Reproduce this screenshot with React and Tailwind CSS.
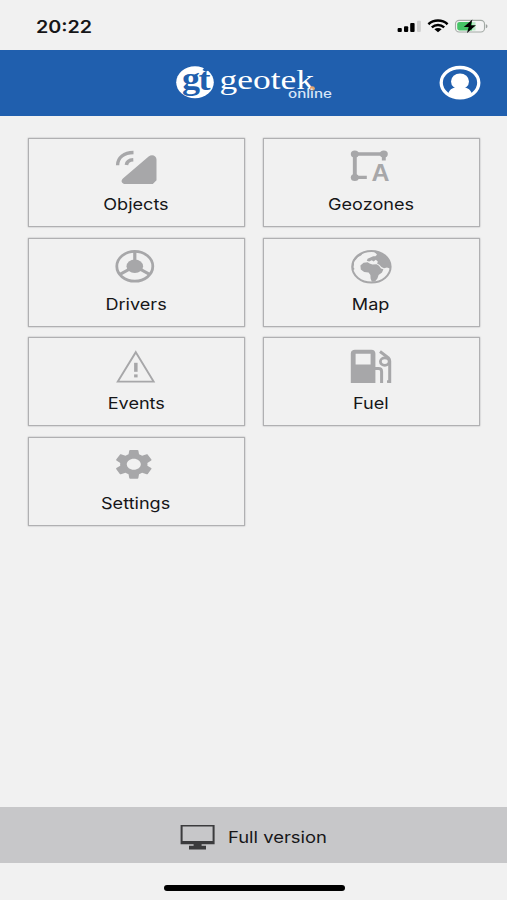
import React from 'react';

function ObjectsIcon() {
  return (
    <svg width="44" height="36" viewBox="0 0 44 36" fill="none">
      <path d="M3.6 16.2C3.6 8.6 10 3.5 19.5 3.5" stroke="#a7a7a9" strokeWidth="3.4" />
      <path d="M12.4 16C12.8 12.8 15.4 11 19.3 10.8" stroke="#a7a7a9" strokeWidth="3.6" />
      <path d="M34.6 7.4C38 5 42.5 6.6 42.5 10.6V31.2L38.8 35H11.6C7.6 35 6.2 31.6 9.2 29.2Z" fill="#a7a7a9" />
    </svg>
  );
}

function GeozonesIcon() {
  return (
    <svg className="overflow-visible" width="44" height="36" viewBox="0 0 44 36" fill="#a7a7a9">
      <path d="M5.8 5H34.5M5.8 28.4H17.8" stroke="#a7a7a9" strokeWidth="3.3" />
      <path d="M5.8 5V28.4M34.8 5V11.6" stroke="#a7a7a9" strokeWidth="3.9" />
      <ellipse cx="5.8" cy="5" rx="4" ry="3.5" />
      <ellipse cx="34.8" cy="5" rx="4" ry="3.5" />
      <ellipse cx="5.8" cy="28.4" rx="4" ry="3.5" />
      <text x="22.5" y="31.6" fontFamily="'Liberation Sans', sans-serif" fontWeight="700" fontSize="24" textLength="18" lengthAdjust="spacingAndGlyphs">A</text>
    </svg>
  );
}

function DriversIcon() {
  return (
    <svg width="44" height="36" viewBox="0 0 44 36" fill="none" stroke="#a7a7a9">
      <ellipse cx="20.8" cy="17.3" rx="18" ry="14.9" strokeWidth="2.8" />
      <path d="M20.8 2.5V17.3" strokeWidth="3.2" />
      <path d="M5.5 25.6L20.8 17.3L36.1 25.6" strokeWidth="3" />
      <ellipse cx="20.8" cy="17.3" rx="8.3" ry="6.8" fill="#a7a7a9" stroke="none" />
    </svg>
  );
}

function MapIcon() {
  return (
    <svg width="44" height="36" viewBox="0 0 44 36" fill="#a7a7a9">
      <ellipse cx="22.4" cy="17.8" rx="19.2" ry="15.8" fill="none" stroke="#a7a7a9" strokeWidth="2" />
      <path d="M24.5 2.4C34 3 41.6 9.4 42 17.8L41 19.4L38 18.6L35 19.2L32.4 18L30.4 15.8L28.2 14.8L28.8 12.6L26.8 10.8L24.6 12.4L22.8 11.2L20.2 12.4L17.8 11.8L18.6 9.8L21.4 8.6L24.2 7.2L26.4 7.2L28 5.8L27 4.4Z" />
      <path d="M11.4 16.6L14.6 13.8L18.6 13.2L20.6 14.6L23.4 15.4L27.6 15.2L30 16.8L32 19.4L34.4 20.2L33 23.4L29.6 26L28.4 29.4L26 32.6L22.8 32.8L21.6 29.6L21.4 26L19.6 23.4L15.2 23L11.8 20.4Z" />
      <path d="M3 14.2C4.4 9.6 8.6 5.4 14.6 3.6L12 6.4L9 8L7 10.6L5 12.6L5 15.4L4.4 18.2L5.6 20L3.6 21.6Z" />
    </svg>
  );
}

function EventsIcon() {
  return (
    <svg width="44" height="36" viewBox="0 0 44 36" fill="#a7a7a9">
      <path d="M21.8 4.2L39.6 33.6H3.8Z" fill="none" stroke="#a7a7a9" strokeWidth="1.9" />
      <rect x="20.1" y="14.8" width="3.5" height="9" />
      <rect x="20.1" y="26.4" width="3.5" height="3" />
    </svg>
  );
}

function FuelIcon() {
  return (
    <svg width="44" height="36" viewBox="0 0 44 36" fill="none" stroke="#a7a7a9">
      <path
        fillRule="evenodd"
        d="M1.8 35V5.4C1.8 3 3.6 1.7 6 1.7H22.4C25 1.7 26.4 3.2 26.4 5.4V35ZM6.6 5.8V16.4H21.6V5.8Z"
        fill="#a7a7a9"
        stroke="none"
      />
      <path d="M26 20.6H29.4C31.8 20.6 32.6 21.8 32.6 23.4V35" strokeWidth="3" />
      <path d="M31 3.5L39.4 9.8C40.4 10.8 40.7 11.6 40.7 13V35" strokeWidth="3" />
      <path d="M38 33.6H41" strokeWidth="2.6" />
      <ellipse cx="35.8" cy="13.6" rx="4.4" ry="3.7" strokeWidth="2.8" />
    </svg>
  );
}

function SettingsIcon() {
  return (
    <svg width="44" height="36" viewBox="0 0 44 36" fill="#a7a7a9">
      <path
        transform="translate(-3 -1.7) scale(1.9 1.5)"
        d="M19.14 12.94c.04-.3.06-.61.06-.94 0-.32-.02-.64-.07-.94l2.03-1.58c.18-.14.23-.41.12-.61l-1.92-3.32c-.12-.22-.37-.29-.59-.22l-2.39.96c-.5-.38-1.03-.7-1.62-.94l-.36-2.54c-.04-.24-.24-.41-.48-.41h-3.84c-.24 0-.43.17-.47.41l-.36 2.54c-.59.24-1.13.57-1.62.94l-2.39-.96c-.22-.08-.47 0-.59.22L2.74 8.87c-.12.21-.08.47.12.61l2.03 1.58c-.05.3-.09.63-.09.94s.02.64.07.94l-2.03 1.58c-.18.14-.23.41-.12.61l1.92 3.32c.12.22.37.29.59.22l2.39-.96c.5.38 1.03.7 1.62.94l.36 2.54c.05.24.24.41.48.41h3.84c.24 0 .44-.17.47-.41l.36-2.54c.59-.24 1.13-.56 1.62-.94l2.39.96c.22.08.47 0 .59-.22l1.92-3.32c.12-.22.07-.47-.12-.61l-2.01-1.58zM12 15.7c-2.04 0-3.7-1.66-3.7-3.7s1.66-3.7 3.7-3.7 3.7 1.66 3.7 3.7-1.66 3.7-3.7 3.7z"
      />
    </svg>
  );
}

function StatusIcons() {
  return (
    <svg width="92" height="16" viewBox="0 0 92 16" fill="#000">
      {/* Signal */}
      <rect x="1.6" y="10" width="4.2" height="4" rx="1" />
      <rect x="8" y="8.2" width="4.2" height="5.8" rx="1" />
      <rect x="14.2" y="5" width="4.4" height="9" rx="1" />
      <rect x="21" y="2.8" width="3.8" height="11.2" rx="1" fill="#cfcfcf" />

      {/* Wifi */}
      <g fill="none" stroke="#000" strokeWidth="2.5">
        <path d="M32.4 6.2C37.8 1.4 46.2 1.4 51.6 6.2" />
        <path d="M35.8 9.4C39.4 6.3 44.6 6.3 48.2 9.4" />
      </g>
      <path d="M38.4 11.2C40.4 9.6 43.6 9.6 45.6 11.2L42 14.3Z" />

      {/* Battery */}
      <rect x="59.5" y="2.4" width="29" height="11.6" rx="3.6" fill="#f4f4f4" stroke="#a3aaa5" strokeWidth="1.1" />
      <path d="M63.6 4.1H76V12.4H63.6C62 12.4 61.2 11.4 61.2 10.2V6.3C61.2 5 62 4.1 63.6 4.1Z" fill="#45c466" />
      <path d="M76 4.1H79.5V12.4H76Z" fill="#b9ebc7" />
      <path d="M89.8 6.2C92 6.7 92 9.7 89.8 10.2Z" fill="#9ba09d" />
      <path d="M76.4 1.6L67.8 9.1H72.7L71 15L80 7.2H74.8Z" />
    </svg>
  );
}

function Logo() {
  return (
    <svg className="overflow-visible" width="160" height="36" viewBox="0 0 160 36" fill="#fff">
      <ellipse cx="21" cy="17.3" rx="18.8" ry="16" />
      <g fill="#205fae" fontFamily="'Liberation Serif', serif" fontWeight="700">
        <text x="8" y="24" fontSize="31" textLength="18" lengthAdjust="spacingAndGlyphs">g</text>
        <text x="24.5" y="24.5" fontSize="31" textLength="12" lengthAdjust="spacingAndGlyphs">t</text>
      </g>
      <path d="M28.5 5L31 2L35 4.8L32 7Z" fill="#205fae" />
      <text x="45.5" y="23.7" fontFamily="'Liberation Serif', serif" fontSize="28" textLength="94.5" lengthAdjust="spacingAndGlyphs">geotek</text>
      <ellipse cx="138.3" cy="23.4" rx="2.6" ry="2.2" fill="#e5a36b" />
      <text x="114" y="33.3" fontFamily="Inter, sans-serif" fontWeight="500" fontSize="11.5" fill="#d6e5f7" textLength="44" lengthAdjust="spacingAndGlyphs">online</text>
    </svg>
  );
}

function ProfileIcon() {
  return (
    <svg width="42" height="36" viewBox="0 0 42 36" fill="#fff">
      <ellipse cx="21" cy="17.7" rx="18.8" ry="15.2" fill="none" stroke="#fff" strokeWidth="3.3" />
      <ellipse cx="21" cy="16.4" rx="9" ry="8" />
      <path d="M9.4 28C10.4 24.6 13 23 16 22.4L21 20L26 22.4C29 23 31.6 24.6 32.6 28C29 31.8 25.2 33 21 33C16.8 33 13 31.8 9.4 28Z" />
    </svg>
  );
}

function MonitorIcon() {
  return (
    <svg width="36" height="26" viewBox="0 0 36 26" fill="#3b3b3d">
      <path fillRule="evenodd" d="M.6 1H34.6V20.3H.6ZM2.6 2.6V17H32.6V2.6Z" />
      <path d="M13.6 20H21.6V21.8H26V25.4H9V21.8H13.6Z" />
    </svg>
  );
}

const menu = [
  { label: 'Objects', icon: ObjectsIcon },
  { label: 'Geozones', icon: GeozonesIcon },
  { label: 'Drivers', icon: DriversIcon },
  { label: 'Map', icon: MapIcon },
  { label: 'Events', icon: EventsIcon },
  { label: 'Fuel', icon: FuelIcon },
  { label: 'Settings', icon: SettingsIcon },
];

function App() {
  return (
    <div className="flex flex-col w-[507px] h-[900px] overflow-hidden bg-[#f1f1f1] font-['Inter',sans-serif] text-[#161618]">
      {/* Status bar */}
      <div className="flex items-center justify-between h-[50px] pl-9 pr-[19px] pt-[3px]">
        <span className="inline-block pt-px origin-left scale-x-[1.16] text-[17px] font-semibold leading-none">20:22</span>
        <div className="pb-0.5">
          <StatusIcons />
        </div>
      </div>

      {/* Header */}
      <header className="grid grid-cols-[1fr_160px_1fr] items-center h-[66px] bg-[#205fae]">
        <div />
        <Logo />
        <div className="flex justify-end pr-[26px]">
          <ProfileIcon />
        </div>
      </header>

      {/* Menu */}
      <main className="flex-1 pt-[22px] px-7">
        <div className="grid grid-cols-[217px_217px] gap-x-[18px] gap-y-[10.7px]">
          {menu.map(({ label, icon: Icon }) => (
            <button key={label} className="flex flex-col items-center h-[89px] pt-[10px] pr-px border border-[#b0b0b2] shadow-[0_0_1.5px_#a8a8aa]">
              <Icon />
              <span className="mt-[9px] scale-x-[1.13] text-base leading-5">{label}</span>
            </button>
          ))}
        </div>
      </main>

      {/* Footer */}
      <footer>
        <button className="flex items-center w-full h-14 pl-[180px] bg-[#c7c7c9]">
          <div className="pt-[3px]">
            <MonitorIcon />
          </div>
          <span className="ml-3 pt-1 origin-left scale-x-[1.15] text-base leading-5">Full version</span>
        </button>
        <div className="flex justify-center h-[37px] pt-[22px] pl-px">
          <div className="w-[181px] h-1.5 rounded-full bg-black" />
        </div>
      </footer>
    </div>
  );
}

export default App;
